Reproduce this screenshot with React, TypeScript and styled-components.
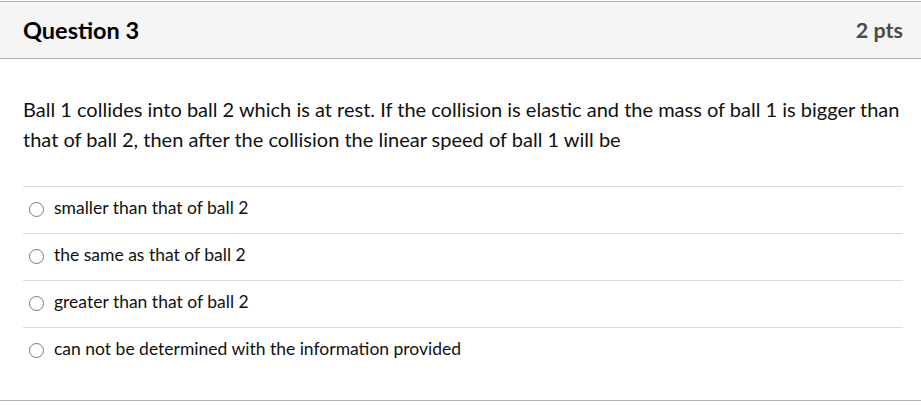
import React from 'react';
import styled, { createGlobalStyle } from 'styled-components';

const GlobalStyle = createGlobalStyle`
  body {
    margin: 0;
    background: #ffffff;
    font-family: Lato, "Liberation Sans", sans-serif;
    color: #2d3b45;
  }
`;

const QuestionCard = styled.div`
  margin-top: 1px;
  border-top: 1px solid #b0b0b0;
  border-bottom: 1px solid #b0b0b0;
  background: #fff;
  height: 400px;
  box-sizing: border-box;
`;

const Header = styled.div`
  height: 56px;
  background-color: #f5f5f5;
  border-bottom: 1px solid #b0b0b0;
  display: flex;
  align-items: center;
  justify-content: space-between;
  padding: 0 18px 0 23px;
`;

const Title = styled.h2`
  margin: 0;
  font-size: 23.5px;
  font-weight: 700;
  color: #000;
`;

const Points = styled.div`
  font-size: 21.5px;
  font-weight: 700;
  color: #4a4a4a;
`;

const Body = styled.div`
  padding: 35px 18px 0 23px;
`;

const QuestionText = styled.p`
  margin: 0 0 32px;
  font-size: 20px;
  line-height: 30px;
  color: #111;
`;

const AnswerList = styled.div`
  display: flex;
  flex-direction: column;
`;

const Answer = styled.label`
  height: 46px;
  border-top: 1px solid #dcdcdc;
  display: flex;
  align-items: center;
  gap: 10px;
  padding-left: 6px;
  font-size: 17.5px;
  color: #111;
  cursor: pointer;
`;

const AnswerText = styled.span`
  padding-bottom: 5px;
`;

const Radio = styled.span`
  width: 15px;
  height: 15px;
  margin-bottom: 2px;
  box-sizing: border-box;
  border: 1px solid #7a7a7a;
  border-radius: 50%;
  background: #fff;
  flex-shrink: 0;
`;

const answers = [
  'smaller than that of ball 2',
  'the same as that of ball 2',
  'greater than that of ball 2',
  'can not be determined with the information provided',
];

const App: React.FC = () => {
  return (
    <>
      <GlobalStyle />
      <QuestionCard>
        <Header>
          <Title>Question 3</Title>
          <Points>2 pts</Points>
        </Header>
        <Body>
          <QuestionText>
            Ball 1 collides into ball 2 which is at rest. If the collision is elastic and the mass of ball 1 is bigger than
            that of ball 2, then after the collision the linear speed of ball 1 will be
          </QuestionText>
          <AnswerList>
            {answers.map(a => (
              <Answer key={a}>
                <Radio />
                <AnswerText>{a}</AnswerText>
              </Answer>
            ))}
          </AnswerList>
        </Body>
      </QuestionCard>
    </>
  );
};

export default App;
